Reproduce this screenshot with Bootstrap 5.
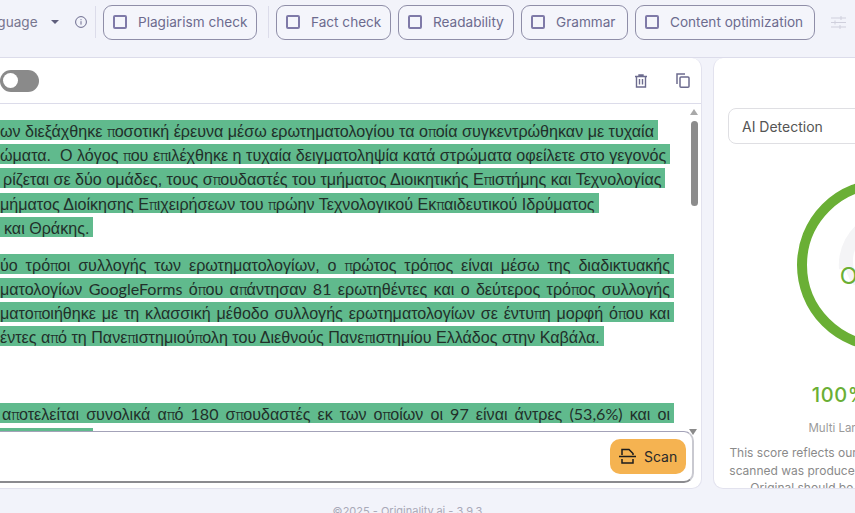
<!DOCTYPE html>
<html lang="el"><head><meta charset="utf-8"><title>Originality</title>
<link href="https://cdn.jsdelivr.net/npm/bootstrap@5.3.0/dist/css/bootstrap.min.css" rel="stylesheet">
<style>
html,body{height:513px;overflow:hidden}
body{background:#f2f3fa;font-family:Inter,"Liberation Sans",sans-serif;color:#6c6b8e;width:855px}
.topbar{height:58px;gap:7px;white-space:nowrap;border-bottom:1px solid #dcdcea;padding-bottom:13px;width:1000px}
.lang{margin-left:-26px;font-size:13.6px;color:#77768f;width:84px;flex:none}
.caret-d{width:0;height:0;border:4px solid transparent;border-top:4px solid #5f5e7c;border-bottom:0;margin:0 0 0 13px}
.info{margin:0 1px 0 10px;flex:none}
.vline{width:1px;height:32px;background:#dcdcea;flex:none}
.vl2{margin-left:4px}
.chip{height:35px;border:1px solid #8f8ea8;border-radius:9px;font-size:13.6px;color:#6c6b8e;padding:0 9px;gap:11px;background:#f4f5fb;flex:none}
.chip .box{width:14px;height:14px;border:2px solid #7f7aa8;border-radius:2px;flex:none}
.c1{width:154px}.c2{width:115px}.c3{width:116px}.c4{width:107px}.c5{width:180px}
.slide{margin-left:9px;flex:none}
.mainrow{height:431px;width:1100px;gap:11px}
.editor{width:702px;flex:none;background:#fff;border:1px solid #e2e2ee;border-left:0;border-top:0;border-radius:0 10px 10px 0;overflow:hidden;position:relative}
.edhead{height:46px;border-bottom:1px solid #dcdcea;padding-right:11px;gap:29px}
.toggle{width:39px;height:22px;border-radius:11px;background:#8a8a8a;margin-right:auto;padding-left:3px}
.toggle span{width:15px;height:15px;border-radius:50%;background:#fff}
.body-wrap{height:327px}
.textarea{width:687px;overflow:hidden;font-family:"Liberation Sans",sans-serif;font-size:16.1px;color:#22302a;padding-top:16px}
.ln{display:block;width:fit-content;height:20px;line-height:22px;background:#60ba8d;padding-right:4px;margin-bottom:4.2px;white-space:nowrap}
.jst{width:674px;white-space:normal;text-align:justify;text-align-last:justify;overflow:hidden}
.i4{padding-left:4px}
.i3{padding-left:3px}
.i2{padding-left:2px}
.gap1{margin-bottom:17px}
.gap2{margin-bottom:57px}
.short{width:93px;height:4px;margin:0}
.lat{font-family:Lato,Inter,sans-serif}
.pi{font-family:Inter,sans-serif;font-weight:300;font-style:normal;font-size:14.5px;letter-spacing:-.8px}
.scol{width:14px;flex:none;padding-top:5px}
.up,.down{width:0;height:0;border:4px solid transparent;margin:0 auto}
.up{border-bottom:6px solid #a9a9a9;border-top:0}
.down{border-top:6px solid #8a8a8a;border-bottom:0;position:absolute;right:4px;top:371px}
.thumb{width:7px;height:85px;border-radius:4px;background:#8c8c8c;margin:6px auto 0}
.inputbox{height:52px;width:704px;margin-left:-10px;border:1px solid #a3a2b8;border-bottom:2px solid #8b8b8f;border-right:2px solid #c9c9d0;border-radius:10px;padding:0 6px 0 0;background:#fff}
.scanbtn{width:76px;height:35px;background:#f5b351;border:0;border-radius:10px;color:#2a2a2a;font-size:14px;gap:8px;padding:0 9px;font-weight:400}
.scanbtn svg{flex:none}
.panel{width:339px;flex:none;background:#fff;border:1px solid #e2e2ee;border-top:0;border-radius:10px;overflow:hidden;padding:50px 14px 0;text-align:center}
.sel{height:36px;border:1px solid #dfdfe3;border-radius:8px;text-align:left;padding:0 13px;color:#555;font-size:14px;line-height:36px}
.ringbox{width:172px;height:172px;margin:35px auto 0;position:relative}
.ringlabel{position:absolute;left:0;right:0;top:85px;font-size:23.5px;color:#6aaf35;line-height:1}
.pct{color:#6aaf35;font-size:20px;font-weight:500;letter-spacing:.6px;margin-top:33px;line-height:22px}
.multi{color:#9a9a9a;font-size:11.5px;margin-top:15px;line-height:14px}
.desc{color:#8a8a8a;font-size:12px;line-height:17.5px;margin-top:9px;white-space:nowrap}
.foot{font-size:11px;color:#a9a9b8;text-align:center;width:815px;margin-top:15px;line-height:14px}
</style></head>
<body>
<div class="topbar d-flex align-items-center">
  <div class="lang d-flex align-items-center">Language<span class="caret-d"></span></div>
  <svg class="info" width="12" height="12" viewBox="0 0 12 12" fill="none" stroke="#6c6b8e"><circle cx="6" cy="6" r="5.4"/><path d="M6 5.2v3.4M6 3.2v1"/></svg>
  <div class="vline"></div>
  <div class="chip c1 d-flex align-items-center"><span class="box"></span>Plagiarism check</div>
  <div class="vline vl2"></div>
  <div class="chip c2 d-flex align-items-center"><span class="box"></span>Fact check</div>
  <div class="chip c3 d-flex align-items-center"><span class="box"></span>Readability</div>
  <div class="chip c4 d-flex align-items-center"><span class="box"></span>Grammar</div>
  <div class="chip c5 d-flex align-items-center"><span class="box"></span>Content optimization</div>
  <svg class="slide" width="15" height="15" viewBox="0 0 15 15" stroke="#cfcfdc" fill="none"><path d="M0 3h15M0 7.5h15M0 12h15M10 1v4M4 5.5v4M9 10v4"/></svg>
</div>
<div class="mainrow d-flex">
  <div class="editor">
    <div class="edhead d-flex align-items-center">
      <div class="toggle d-flex align-items-center"><span></span></div>
      <svg width="12" height="14" viewBox="0 0 12 14" fill="none" stroke="#6c6b8e" stroke-width="1.4"><path d="M0 2.5h12M4 2.5V1h4v1.500M1.500 2.500V13h9V2.500M4.500 5v5.500M7.500 5v5.500"/></svg>
      <svg width="14" height="15" viewBox="0 0 14 15" fill="none" stroke="#6c6b8e" stroke-width="1.5"><path d="M1 11V1h8"/><rect x="4" y="4" width="9" height="10.200" rx="1"/></svg>
    </div>
    <div class="body-wrap d-flex">
      <div class="textarea">
        <span class="ln">ων διεξάχθηκε <i class="pi">π</i>οσοτική έρευνα μέσω ερωτηματολογίου τα ο<i class="pi">π</i>οία συγκεντρώθηκαν με τυχαία</span>
        <span class="ln">ώματα.&nbsp; Ο λόγος <i class="pi">π</i>ου ε<i class="pi">π</i>ιλέχθηκε η τυχαία δειγματοληψία κατά στρώματα οφείλετε στο γεγονός</span>
        <span class="ln i3">ρίζεται σε δύο ομάδες, τους σ<i class="pi">π</i>ουδαστές του τμήματος Διοικητικής Ε<i class="pi">π</i>ιστήμης και Τεχνολογίας</span>
        <span class="ln">μήματος Διοίκησης Ε<i class="pi">π</i>ιχειρήσεων του <i class="pi">π</i>ρώην Τεχνολογικού Εκ<i class="pi">π</i>αιδευτικού Ιδρύματος</span>
        <span class="ln i4 gap1">και Θράκης.</span>
        <span class="ln jst">ύο τρό<i class="pi">π</i>οι συλλογής των ερωτηματολογίων, ο <i class="pi">π</i>ρώτος τρό<i class="pi">π</i>ος είναι μέσω της διαδικτυακής</span>
        <span class="ln jst">ματολογίων <span class="lat">GoogleForms</span> ό<i class="pi">π</i>ου α<i class="pi">π</i>άντησαν <span class="lat">81</span> ερωτηθέντες και ο δεύτερος τρό<i class="pi">π</i>ος συλλογής</span>
        <span class="ln jst">ματο<i class="pi">π</i>οιήθηκε με τη κλασσική μέθοδο συλλογής ερωτηματολογίων σε έντυ<i class="pi">π</i>η μορφή ό<i class="pi">π</i>ου και</span>
        <span class="ln gap2">έντες α<i class="pi">π</i>ό τη Πανε<i class="pi">π</i>ιστημιού<i class="pi">π</i>ολη του Διεθνούς Πανε<i class="pi">π</i>ιστημίου Ελλάδος στην Καβάλα.</span>
        <span class="ln jst i2">α<i class="pi">π</i>οτελείται συνολικά α<i class="pi">π</i>ό <span class="lat">180</span> σ<i class="pi">π</i>ουδαστές εκ των ο<i class="pi">π</i>οίων οι <span class="lat">97</span> είναι άντρες <span class="lat">(53,6%)</span> και οι</span>
        <span class="ln short"></span>
      </div>
      <div class="scol"><div class="up"></div><div class="thumb"></div></div>
    </div>
    <div class="down"></div>
    <div class="inputbox d-flex align-items-center justify-content-end">
      <button class="scanbtn d-flex align-items-center" type="button">
        <svg width="17" height="17" viewBox="0 0 17 17" fill="none" stroke="#1d1d1d" stroke-width="1.500"><path d="M3 7V1.500h7l4 4V7M0 8.500h17M3 11v4h11v-4"/></svg>Scan
      </button>
    </div>
  </div>
  <div class="panel">
    <div class="sel">AI Detection</div>
    <div class="ringbox">
      <svg width="172" height="172" viewBox="0 0 172 172" fill="none"><path d="M60 104a34 34 0 0 1 52 -44M46 90a50 50 0 0 1 80 -44" stroke="#f4f4f6" stroke-width="8"/><circle cx="86" cy="86" r="81" stroke="#6aaf35" stroke-width="10"/></svg>
      <div class="ringlabel">Original</div>
    </div>
    <div class="pct">100% Original</div>
    <div class="multi">Multi Language Model 2.0.1</div>
    <div class="desc">This score reflects our tool's confidence that the texts<br>scanned was produced by AI. A score of 100% means<br>Original should be read as high confidence tha</div>
  </div>
</div>
<div class="foot">©2025 - Originality.ai - 3.9.3</div>
</body></html>
